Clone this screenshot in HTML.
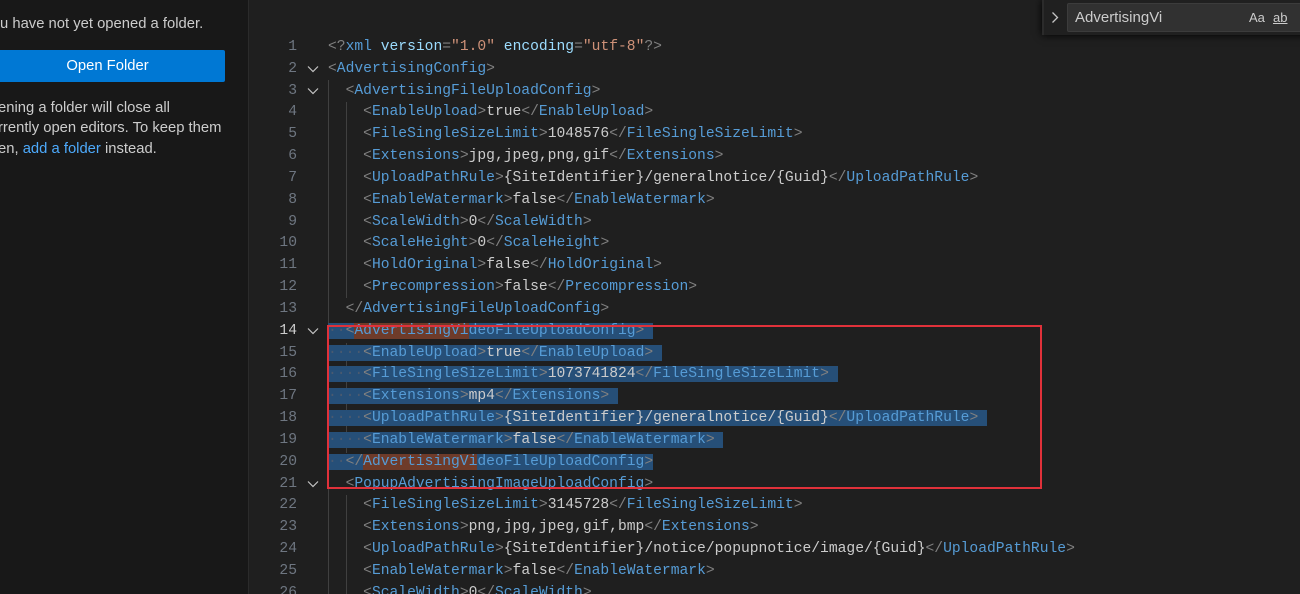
<!DOCTYPE html>
<html><head><meta charset="utf-8"><style>
html,body{margin:0;width:1300px;height:594px;overflow:hidden}
body{background:#1f1f1f;position:relative;font-family:"Liberation Sans",sans-serif}
#side{position:absolute;left:0;top:0;width:248px;height:594px;background:#181818;border-right:1px solid #2b2b2b;color:#cccccc;font-size:14.8px}
#side .p{position:absolute;left:0;white-space:nowrap}
#btn{position:absolute;left:-10px;top:50px;width:235px;height:32px;background:#0078d4;border-radius:2px;color:#fff;text-align:center;line-height:33px;font-size:14.8px}
a{color:#4daafc;text-decoration:none}
#ed{position:absolute;left:249px;top:0;right:0;height:594px;font-family:"Liberation Mono",monospace;font-size:14.65px}
.l{position:absolute;left:0;height:22px;line-height:22px;white-space:pre;width:1100px}
.n{position:absolute;left:0;width:48px;text-align:right;color:#6e7681}
.n.a{color:#cccccc}
.f{position:absolute;left:58px;top:7px;width:12px;height:8px}
.c{position:absolute;left:79px;color:#cccccc}
.b{color:#808080}.t{color:#569cd6}.v{color:#ce9178}.at{color:#9cdcfe}.w{color:#4a5a70}
.sel{background:#264f78}
.m{background:#6e3b2a}
.g{position:absolute;width:1px;background:#404040}
#find{position:absolute;left:1042px;top:0;width:270px;height:35px;background:#202020;box-shadow:0 0 8px #000;border-left:2px solid #2b2b2b}
#fin{position:absolute;left:23px;top:3px;width:240px;height:27px;background:#313131;border:1px solid #3c3c3c;border-radius:2px;color:#cccccc;font-size:15px;line-height:27px;padding-left:7px}
#box{position:absolute;left:327px;top:325px;width:711px;height:160px;border:2px solid #e0313a}
</style></head><body>
<div id="side">
<div class="p" style="top:16px">u have not yet opened a folder.</div>
<div id="btn">Open Folder</div>
<div class="p" style="top:100px;left:-2px">ening a folder will close all</div>
<div class="p" style="top:120px;left:-2px">rrently open editors. To keep them</div>
<div class="p" style="top:141px;left:-2px">en, <a>add a folder</a> instead.</div>
</div>
<div id="ed">
<div class="g" style="left:79px;top:80px;height:514px"></div>
<div class="g" style="left:97px;top:102px;height:196px"></div>
<div class="g" style="left:97px;top:343px;height:110px"></div>
<div class="g" style="left:97px;top:495px;height:99px"></div>

<div class="l" style="top:36px"><span class="n">1</span><span class="c"><span class="b">&lt;?</span><span class="t">xml</span> <span class="at">version</span><span class="b">=</span><span class="v">"1.0"</span> <span class="at">encoding</span><span class="b">=</span><span class="v">"utf-8"</span><span class="b">?&gt;</span></span></div>
<div class="l" style="top:58px"><span class="n">2</span><svg class="f" viewBox="0 0 12 8"><path d="M1 1.5L6 6.5L11 1.5" fill="none" stroke="#c5c5c5" stroke-width="1.2"/></svg><span class="c"><span class="b">&lt;</span><span class="t">AdvertisingConfig</span><span class="b">&gt;</span></span></div>
<div class="l" style="top:80px"><span class="n">3</span><svg class="f" viewBox="0 0 12 8"><path d="M1 1.5L6 6.5L11 1.5" fill="none" stroke="#c5c5c5" stroke-width="1.2"/></svg><span class="c">  <span class="b">&lt;</span><span class="t">AdvertisingFileUploadConfig</span><span class="b">&gt;</span></span></div>
<div class="l" style="top:101px"><span class="n">4</span><span class="c">    <span class="b">&lt;</span><span class="t">EnableUpload</span><span class="b">&gt;</span>true<span class="b">&lt;/</span><span class="t">EnableUpload</span><span class="b">&gt;</span></span></div>
<div class="l" style="top:123px"><span class="n">5</span><span class="c">    <span class="b">&lt;</span><span class="t">FileSingleSizeLimit</span><span class="b">&gt;</span>1048576<span class="b">&lt;/</span><span class="t">FileSingleSizeLimit</span><span class="b">&gt;</span></span></div>
<div class="l" style="top:145px"><span class="n">6</span><span class="c">    <span class="b">&lt;</span><span class="t">Extensions</span><span class="b">&gt;</span>jpg,jpeg,png,gif<span class="b">&lt;/</span><span class="t">Extensions</span><span class="b">&gt;</span></span></div>
<div class="l" style="top:167px"><span class="n">7</span><span class="c">    <span class="b">&lt;</span><span class="t">UploadPathRule</span><span class="b">&gt;</span>{SiteIdentifier}/generalnotice/{Guid}<span class="b">&lt;/</span><span class="t">UploadPathRule</span><span class="b">&gt;</span></span></div>
<div class="l" style="top:189px"><span class="n">8</span><span class="c">    <span class="b">&lt;</span><span class="t">EnableWatermark</span><span class="b">&gt;</span>false<span class="b">&lt;/</span><span class="t">EnableWatermark</span><span class="b">&gt;</span></span></div>
<div class="l" style="top:211px"><span class="n">9</span><span class="c">    <span class="b">&lt;</span><span class="t">ScaleWidth</span><span class="b">&gt;</span>0<span class="b">&lt;/</span><span class="t">ScaleWidth</span><span class="b">&gt;</span></span></div>
<div class="l" style="top:232px"><span class="n">10</span><span class="c">    <span class="b">&lt;</span><span class="t">ScaleHeight</span><span class="b">&gt;</span>0<span class="b">&lt;/</span><span class="t">ScaleHeight</span><span class="b">&gt;</span></span></div>
<div class="l" style="top:254px"><span class="n">11</span><span class="c">    <span class="b">&lt;</span><span class="t">HoldOriginal</span><span class="b">&gt;</span>false<span class="b">&lt;/</span><span class="t">HoldOriginal</span><span class="b">&gt;</span></span></div>
<div class="l" style="top:276px"><span class="n">12</span><span class="c">    <span class="b">&lt;</span><span class="t">Precompression</span><span class="b">&gt;</span>false<span class="b">&lt;/</span><span class="t">Precompression</span><span class="b">&gt;</span></span></div>
<div class="l" style="top:298px"><span class="n">13</span><span class="c">  <span class="b">&lt;/</span><span class="t">AdvertisingFileUploadConfig</span><span class="b">&gt;</span></span></div>
<div class="l" style="top:320px"><span class="n a">14</span><svg class="f" viewBox="0 0 12 8"><path d="M1 1.5L6 6.5L11 1.5" fill="none" stroke="#c5c5c5" stroke-width="1.2"/></svg><span class="c"><span class="sel"><span class="w">··</span><span class="b">&lt;</span><span class="t m">AdvertisingVi</span><span class="t">deoFileUploadConfig</span><span class="b">&gt;</span> </span></span></div>
<div class="l" style="top:342px"><span class="n">15</span><span class="c"><span class="sel"><span class="w">····</span><span class="b">&lt;</span><span class="t">EnableUpload</span><span class="b">&gt;</span>true<span class="b">&lt;/</span><span class="t">EnableUpload</span><span class="b">&gt;</span> </span></span></div>
<div class="l" style="top:363px"><span class="n">16</span><span class="c"><span class="sel"><span class="w">····</span><span class="b">&lt;</span><span class="t">FileSingleSizeLimit</span><span class="b">&gt;</span>1073741824<span class="b">&lt;/</span><span class="t">FileSingleSizeLimit</span><span class="b">&gt;</span> </span></span></div>
<div class="l" style="top:385px"><span class="n">17</span><span class="c"><span class="sel"><span class="w">····</span><span class="b">&lt;</span><span class="t">Extensions</span><span class="b">&gt;</span>mp4<span class="b">&lt;/</span><span class="t">Extensions</span><span class="b">&gt;</span> </span></span></div>
<div class="l" style="top:407px"><span class="n">18</span><span class="c"><span class="sel"><span class="w">····</span><span class="b">&lt;</span><span class="t">UploadPathRule</span><span class="b">&gt;</span>{SiteIdentifier}/generalnotice/{Guid}<span class="b">&lt;/</span><span class="t">UploadPathRule</span><span class="b">&gt;</span> </span></span></div>
<div class="l" style="top:429px"><span class="n">19</span><span class="c"><span class="sel"><span class="w">····</span><span class="b">&lt;</span><span class="t">EnableWatermark</span><span class="b">&gt;</span>false<span class="b">&lt;/</span><span class="t">EnableWatermark</span><span class="b">&gt;</span> </span></span></div>
<div class="l" style="top:451px"><span class="n">20</span><span class="c"><span class="sel"><span class="w">··</span><span class="b">&lt;/</span><span class="t m">AdvertisingVi</span><span class="t">deoFileUploadConfig</span><span class="b">&gt;</span></span></span></div>
<div class="l" style="top:473px"><span class="n">21</span><svg class="f" viewBox="0 0 12 8"><path d="M1 1.5L6 6.5L11 1.5" fill="none" stroke="#c5c5c5" stroke-width="1.2"/></svg><span class="c">  <span class="b">&lt;</span><span class="t">PopupAdvertisingImageUploadConfig</span><span class="b">&gt;</span></span></div>
<div class="l" style="top:494px"><span class="n">22</span><span class="c">    <span class="b">&lt;</span><span class="t">FileSingleSizeLimit</span><span class="b">&gt;</span>3145728<span class="b">&lt;/</span><span class="t">FileSingleSizeLimit</span><span class="b">&gt;</span></span></div>
<div class="l" style="top:516px"><span class="n">23</span><span class="c">    <span class="b">&lt;</span><span class="t">Extensions</span><span class="b">&gt;</span>png,jpg,jpeg,gif,bmp<span class="b">&lt;/</span><span class="t">Extensions</span><span class="b">&gt;</span></span></div>
<div class="l" style="top:538px"><span class="n">24</span><span class="c">    <span class="b">&lt;</span><span class="t">UploadPathRule</span><span class="b">&gt;</span>{SiteIdentifier}/notice/popupnotice/image/{Guid}<span class="b">&lt;/</span><span class="t">UploadPathRule</span><span class="b">&gt;</span></span></div>
<div class="l" style="top:560px"><span class="n">25</span><span class="c">    <span class="b">&lt;</span><span class="t">EnableWatermark</span><span class="b">&gt;</span>false<span class="b">&lt;/</span><span class="t">EnableWatermark</span><span class="b">&gt;</span></span></div>
<div class="l" style="top:582px"><span class="n">26</span><span class="c">    <span class="b">&lt;</span><span class="t">ScaleWidth</span><span class="b">&gt;</span>0<span class="b">&lt;/</span><span class="t">ScaleWidth</span><span class="b">&gt;</span></span></div>
</div>
<div id="box"></div>
<div id="find"><svg style="position:absolute;left:7px;top:11px" width="8" height="13" viewBox="0 0 8 13"><path d="M1.5 1.5L6.5 6.5L1.5 11.5" fill="none" stroke="#c5c5c5" stroke-width="1.3"/></svg>
<div id="fin">AdvertisingVi<span style="position:absolute;left:181px;font-size:13px">Aa</span><span style="position:absolute;left:205px;font-size:13px;text-decoration:underline">ab</span></div></div>
</body></html>
